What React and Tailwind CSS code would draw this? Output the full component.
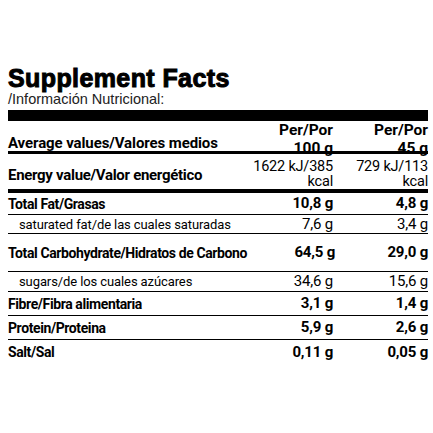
import React from "react";

// Nutrition rows: label, per 100 g, per 45 g
const rows = [
  { label: "Total Fat/Grasas", a: "10,8 g", b: "4,8 g", h: "h-[22px]" },
  { label: "saturated fat/de las cuales saturadas", a: "7,6 g", b: "3,4 g", sub: true, h: "h-[19px]" },
  { label: "Total Carbohydrate/Hidratos de Carbono", a: "64,5 g", b: "29,0 g", h: "h-[38px]" },
  { label: "sugars/de los cuales azúcares", a: "34,6 g", b: "15,6 g", sub: true, h: "h-[20px]" },
  { label: "Fibre/Fibra alimentaria", a: "3,1 g", b: "1,4 g", h: "h-[24px]" },
  { label: "Protein/Proteina", a: "5,9 g", b: "2,6 g", h: "h-[24px]" },
  { label: "Salt/Sal", a: "0,11 g", b: "0,05 g", h: "h-[24px]", last: true },
];

const cond = "font-['Roboto',sans-serif] whitespace-nowrap";

const App = () => {
  return (
    <div className="w-[433px] h-[433px] bg-white text-black overflow-hidden">
      <div className="pt-[64px] pl-2 pr-[5px]">
        {/* Title */}
        <h1 className="font-['Liberation_Sans',Arial,sans-serif] font-bold text-[25px] leading-[28px] tracking-[0.4px] [-webkit-text-stroke:1px_black]">
          Supplement Facts
        </h1>
        <p className="font-['Liberation_Sans',Arial,sans-serif] text-[14.5px] leading-[14px] text-[#222]">
          /Información Nutricional:
        </p>

        <div className="mt-[4px] h-[11px] bg-black" />

        {/* Header */}
        <div className={`${cond} flex items-start h-[33px] border-b-[3px] border-black`}>
          <div className="flex-1 font-bold text-[15px] leading-none tracking-[-0.1px] pt-[15px]">
            Average values/Valores medios
          </div>
          <div className="w-[90px] text-right font-bold text-[15.5px] leading-[18px]">
            Per/Por<br />100 g
          </div>
          <div className="w-[95px] text-right font-bold text-[15.5px] leading-[18px]">
            Per/Por<br />45 g
          </div>
        </div>

        {/* Energy */}
        <div className={`${cond} flex items-start h-[39px] border-b-4 border-black`}>
          <div className="flex-1 font-bold text-[15px] leading-none tracking-[-0.3px] pt-[14px]">
            Energy value/Valor energético
          </div>
          <div className="w-[90px] text-right text-[14.5px] leading-[15px] tracking-[-0.2px] pt-[5px]">
            1622 kJ/385<br />kcal
          </div>
          <div className="w-[95px] text-right text-[14.5px] leading-[15px] tracking-[-0.2px] pt-[5px]">
            729 kJ/113<br />kcal
          </div>
        </div>

        {rows.map((r) => (
          <div
            key={r.label}
            className={`${cond} flex items-center ${r.h} ${r.last ? "" : "border-b border-black"} leading-none`}
          >
            <div
              className={`flex-1 ${
                r.sub
                  ? "pl-[11px] font-normal text-[13px] tracking-[-0.1px]"
                  : "font-bold text-[14px] tracking-[-0.4px]"
              }`}
            >
              {r.label}
            </div>
            <div className={`w-[90px] text-right text-[15px] tracking-[-0.2px] ${r.sub ? "font-normal" : "font-bold"}`}>
              {r.a}
            </div>
            <div className={`w-[95px] text-right text-[15px] tracking-[-0.2px] ${r.sub ? "font-normal" : "font-bold"}`}>
              {r.b}
            </div>
          </div>
        ))}
      </div>
    </div>
  );
};

export default App;
